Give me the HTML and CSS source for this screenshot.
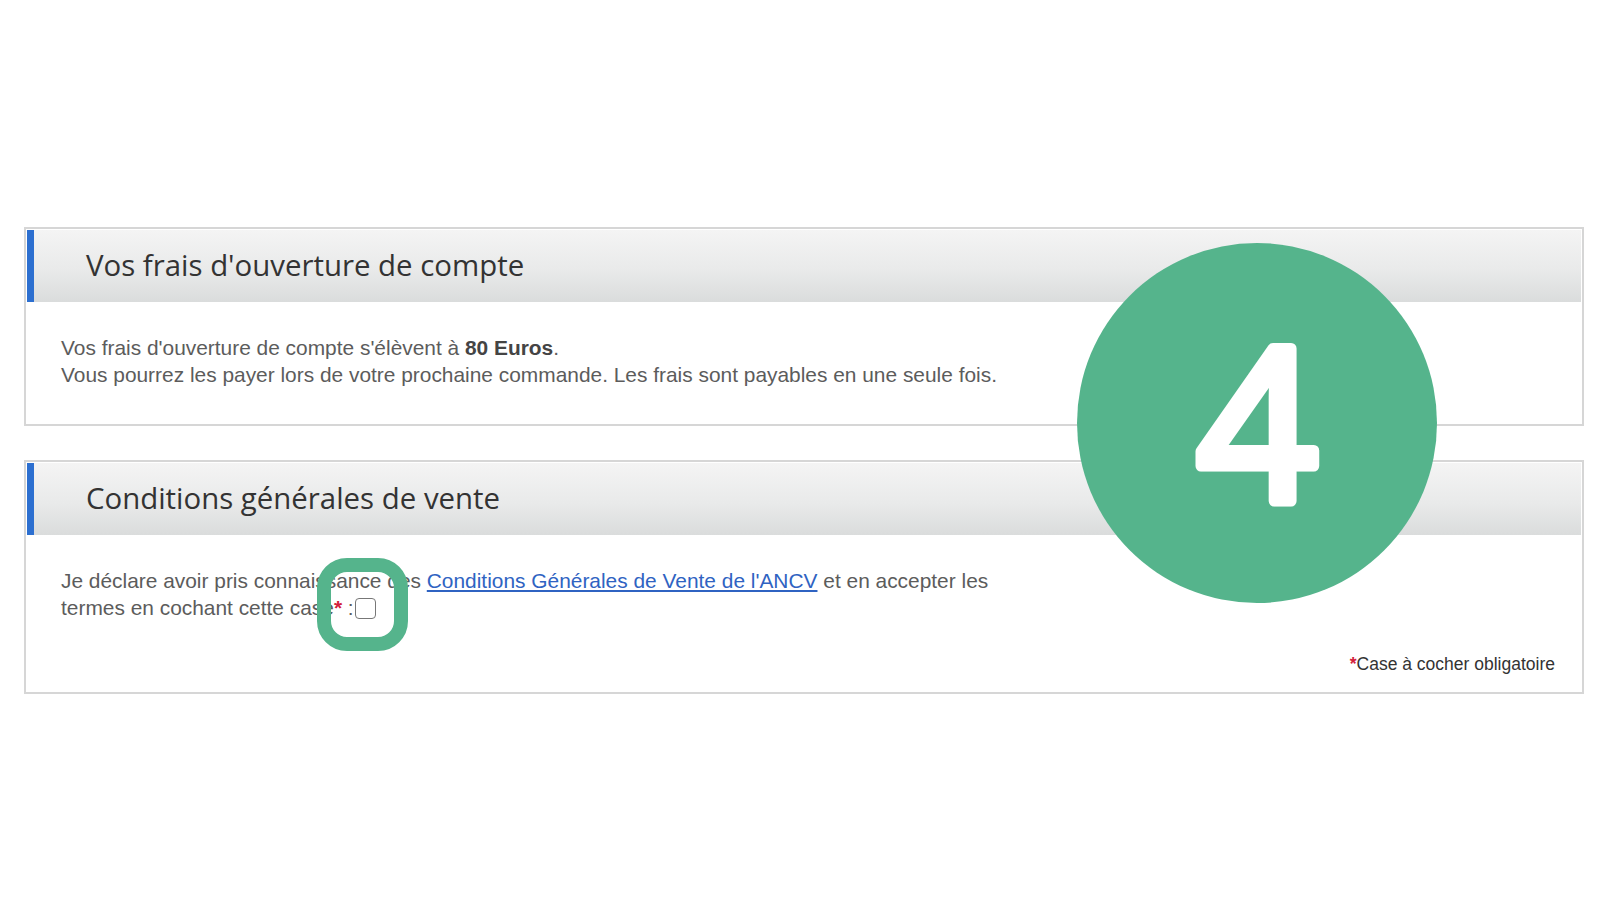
FILE: index.html
```html
<!DOCTYPE html>
<html lang="fr">
<head>
  <meta charset="UTF-8">
  <title>Ouverture de compte</title>
  <link rel="stylesheet" href="styles.css">
</head>
<body>
  <div class="page">
    <section class="panel">
      <h2 class="panel-title">Vos frais d'ouverture de compte</h2>
      <div class="panel-body">
        <p>Vos frais d'ouverture de compte s'élèvent à <strong>80 Euros</strong>.<br>
        Vous pourrez les payer lors de votre prochaine commande. Les frais sont payables en une seule fois.</p>
      </div>
    </section>

    <section class="panel">
      <h2 class="panel-title">Conditions générales de vente</h2>
      <div class="panel-body cgv">
        <p>Je déclare avoir pris connaissance des <a href="#">Conditions Générales de Vente de l'ANCV</a> et en accepter les<br>
        termes en cochant cette case<span class="req">*</span> :<input type="checkbox" class="check"></p>
        <p class="note"><span class="req">*</span>Case à cocher obligatoire</p>
      </div>
    </section>

    <!-- overlays of the tutorial picture -->
    <div class="highlight"></div>
    <div class="step-badge">
      <svg width="360" height="360" viewBox="0 0 360 360">
        <circle cx="180" cy="180" r="180" fill="#55b48c"/>
        <text x="180" y="258" text-anchor="middle" class="step-num">4</text>
      </svg>
    </div>
  </div>
</body>
</html>
```

FILE: styles.css
```css
/* Reset some default styles */
body, h2, p {
  margin: 0;
  padding: 0;
}

body {
  background-color: #fff;
  font-family: "Liberation Sans", Arial, sans-serif;
}

.page {
  position: relative;
  padding: 227px 16px 0 24px;
}

.panel {
  border: 2px solid #d6d6d6;
  padding: 1px;
  margin-bottom: 34px;
  background-color: #fff;
}

.panel-title {
  height: 72px;
  line-height: 70px;
  padding-left: 52px;
  border-left: 7px solid #2c6fd0;
  background: linear-gradient(to bottom, #f4f4f4 0%, #e9eaea 55%, #dadcdc 100%);
  font-family: "Open Sans", sans-serif;
  font-weight: 400;
  font-size: 29.4px;
  color: #333;
}

.panel-body {
  padding: 33px 26px 35px 34px;
  font-size: 20.9px;
  line-height: 26.5px;
  color: #5c5c5c;
}

.panel-body strong {
  color: #444;
}

.panel-body a {
  color: #2f63c2;
}

.cgv {
  padding-bottom: 13px;
}

.req {
  color: #d3203b;
  font-weight: bold;
}

.check {
  appearance: none;
  -webkit-appearance: none;
  width: 21px;
  height: 21px;
  margin: 0 0 -4px 1px;
  border: 1.5px solid #777;
  border-radius: 4px;
  background-color: #fff;
}

.note {
  margin-top: 30px;
  text-align: right;
  font-size: 17.5px;
  color: #333;
}

.highlight {
  position: absolute;
  left: 317px;
  top: 558px;
  width: 91px;
  height: 93px;
  box-sizing: border-box;
  border: 14px solid #55b48c;
  border-radius: 30px;
}

.step-badge {
  position: absolute;
  left: 1077px;
  top: 243px;
  width: 360px;
  height: 360px;
}

.step-badge svg {
  display: block;
}

.step-num {
  font-family: "Open Sans", sans-serif;
  font-size: 212px;
  fill: #fff;
  stroke: #fff;
  stroke-width: 11;
  stroke-linejoin: round;
}
```
